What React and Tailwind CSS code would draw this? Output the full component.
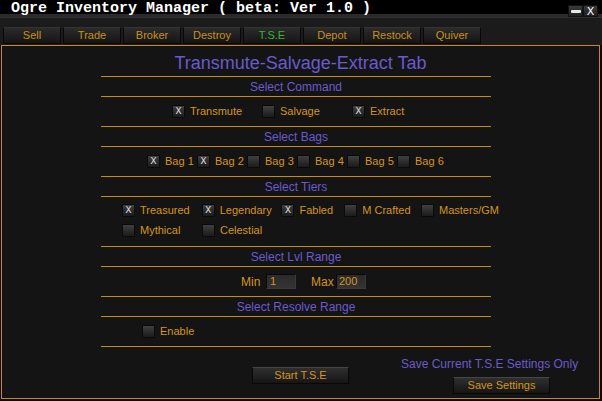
import React from 'react';

function Box({ checked }) {
  return (
    <span className="flex h-[13px] w-[13px] shrink-0 items-center justify-center rounded-[1px] border border-[#0a0a0a] bg-linear-to-b from-[#404040] to-[#1b1b1b] font-['Liberation_Mono',monospace] text-[10px] leading-none text-[#e0e0e0]">
      {checked ? 'X' : ''}
    </span>
  );
}

function Check({ label, checked, w }) {
  return (
    <div className={`flex h-[13px] items-center ${w}`}>
      <Box checked={checked} />
      <span className="ml-[5px] whitespace-nowrap text-[11px] leading-none text-[#d4951a]">{label}</span>
    </div>
  );
}

function Header({ children }) {
  return (
    <div className="flex h-[20px] items-center justify-center border-b border-[#c98a0e] text-[12px] text-[#6a5acd]">
      {children}
    </div>
  );
}

function Tab({ label, active }) {
  return (
    <div
      className={`flex h-[17px] w-[58px] items-center justify-center border border-[#080808] border-t-[#333] bg-linear-to-b from-[#2b2b2b] to-[#151515] text-[11px] leading-none ${
        active ? 'text-[#35b535]' : 'text-[#c8901a]'
      }`}
    >
      {label}
    </div>
  );
}

function Btn({ label, className }) {
  return (
    <div
      className={`flex h-[17px] w-[97px] items-center justify-center rounded-[1px] border border-[#080808] border-t-[#454545] bg-linear-to-b from-[#2f2f2f] to-[#161616] text-[11px] leading-none text-[#d4951a] ${className}`}
    >
      {label}
    </div>
  );
}

export default function App() {
  const tabs = ['Sell', 'Trade', 'Broker', 'Destroy', 'T.S.E', 'Depot', 'Restock', 'Quiver'];
  return (
    <div className="flex h-[401px] w-[602px] flex-col overflow-hidden bg-[#0b0b0b] font-['Liberation_Sans',sans-serif]">
      {/* title bar */}
      <div className="relative h-[17px] shrink-0">
        <div className="h-[14px] bg-black pl-[11px] font-['Liberation_Mono',monospace] text-[15px] font-bold leading-[18px] whitespace-pre text-white">
          Ogre Inventory Manager ( beta: Ver 1.0 )
        </div>
        <div className="h-[3px] bg-[#2a2a2a]" />
        <div className="absolute right-[4px] top-[5px] flex">
          <div className="flex h-[12px] w-[15px] items-center justify-center border border-[#111] bg-linear-to-b from-[#3a3a3a] to-[#202020]">
            <div className="h-[3px] w-[10px] rounded-[1px] bg-[#e8e8e8]" />
          </div>
          <div className="flex h-[12px] w-[15px] items-center justify-center border border-[#111] bg-linear-to-b from-[#3a3a3a] to-[#202020] font-['DejaVu_Sans',sans-serif] text-[11px] leading-none text-white">
            X
          </div>
        </div>
      </div>

      {/* tab strip */}
      <div className="flex h-[28px] shrink-0 items-end gap-[2px] border-t border-[#303030] bg-[#1b1b1b] pb-[1px] pl-[3px]">
        {tabs.map((t) => (
          <Tab key={t} label={t} active={t === 'T.S.E'} />
        ))}
      </div>

      {/* main panel */}
      <div className="ml-[1px] flex h-[354px] w-[599px] shrink-0 flex-col border border-[#c98a0e] bg-[#141414]">
        <div className="flex h-[30px] items-center justify-center pt-[4px] text-[18px] text-[#6a5acd]">
          Transmute-Salvage-Extract Tab
        </div>

        <div className="ml-[99px] w-[390px] border-t border-[#c98a0e]">
          <Header>Select Command</Header>
          <div className="flex h-[30px] items-center border-b border-[#c98a0e] pl-[71px]">
            <Check label="Transmute" checked w="w-[90px]" />
            <Check label="Salvage" w="w-[90px]" />
            <Check label="Extract" checked w="w-[90px]" />
          </div>

          <Header>Select Bags</Header>
          <div className="flex h-[30px] items-center border-b border-[#c98a0e] pl-[46px]">
            <Check label="Bag 1" checked w="w-[50px]" />
            <Check label="Bag 2" checked w="w-[50px]" />
            <Check label="Bag 3" w="w-[50px]" />
            <Check label="Bag 4" w="w-[50px]" />
            <Check label="Bag 5" w="w-[50px]" />
            <Check label="Bag 6" w="w-[50px]" />
          </div>

          <Header>Select Tiers</Header>
          <div className="flex h-[50px] flex-col gap-[7px] border-b border-[#c98a0e] pl-[21px] pt-[7px]">
            <div className="flex">
              <Check label="Treasured" checked w="w-[80px]" />
              <Check label="Legendary" checked w="w-[80px]" />
              <Check label="Fabled" checked w="w-[63px]" />
              <Check label="M Crafted" w="w-[77px]" />
              <Check label="Masters/GM" w="w-[70px]" />
            </div>
            <div className="flex">
              <Check label="Mythical" w="w-[80px]" />
              <Check label="Celestial" w="w-[80px]" />
            </div>
          </div>

          <Header>Select Lvl Range</Header>
          <div className="flex h-[30px] items-center border-b border-[#c98a0e] pl-[140px] text-[11px] text-[#d4951a]">
            <span className="w-[25px] text-[12px] leading-none">Min</span>
            <div className="flex h-[15px] w-[30px] items-center border border-[#090909] border-b-[#3a3a3a] border-r-[#3a3a3a] bg-linear-to-b from-[#2a2a2a] to-[#343434] pl-[3px] leading-none">
              1
            </div>
            <span className="ml-[15px] w-[25px] text-[12px] leading-none">Max</span>
            <div className="flex h-[15px] w-[30px] items-center border border-[#090909] border-b-[#3a3a3a] border-r-[#3a3a3a] bg-linear-to-b from-[#2a2a2a] to-[#343434] pl-[2px] leading-none">
              200
            </div>
          </div>

          <Header>Select Resolve Range</Header>
          <div className="flex h-[30px] items-center border-b border-[#c98a0e] pl-[41px]">
            <Check label="Enable" w="w-[80px]" />
          </div>
        </div>

        <div className="flex flex-1 items-start">
          <Btn label="Start T.S.E" className="ml-[250px] mt-[20px]" />
          <div className="ml-[52px] mt-[10px] flex flex-col">
            <span className="text-[12px] leading-[14px] whitespace-nowrap text-[#6a5acd]">
              Save Current T.S.E Settings Only
            </span>
            <Btn label="Save Settings" className="ml-[52px] mt-[6px]" />
          </div>
        </div>
      </div>
    </div>
  );
}
